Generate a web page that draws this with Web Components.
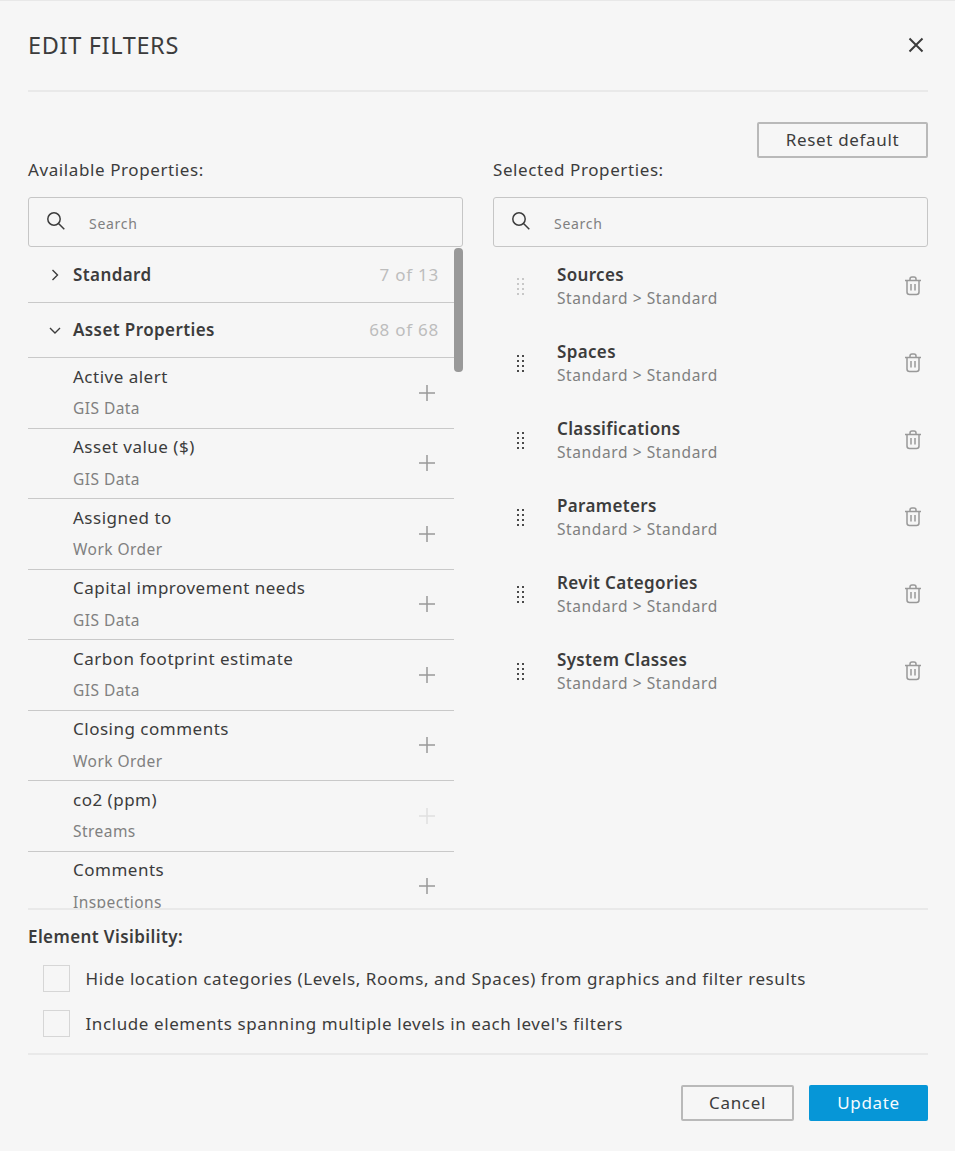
<!DOCTYPE html>
<html>
<head>
<meta charset="utf-8">
<title>Edit filters</title>
<style>
  html, body { margin: 0; height: 100%; background: #f6f6f6; }
  body { font-family: "Noto Sans", "Open Sans", sans-serif; color: #3c3c3c; overflow: hidden; }
</style>
</head>
<body>
<edit-filters>
  <span slot="title">EDIT FILTERS</span>

  <ui-button slot="reset" class="wide">Reset default</ui-button>

  <search-box slot="available-search"></search-box>
  <prop-group slot="available" count="7 of 13">Standard</prop-group>
  <prop-group slot="available" count="68 of 68" open>Asset Properties</prop-group>
  <prop-item slot="available" sub="GIS Data">Active alert</prop-item>
  <prop-item slot="available" sub="GIS Data">Asset value ($)</prop-item>
  <prop-item slot="available" sub="Work Order">Assigned to</prop-item>
  <prop-item slot="available" sub="GIS Data">Capital improvement needs</prop-item>
  <prop-item slot="available" sub="GIS Data">Carbon footprint estimate</prop-item>
  <prop-item slot="available" sub="Work Order">Closing comments</prop-item>
  <prop-item slot="available" sub="Streams" faded>co2 (ppm)</prop-item>
  <prop-item slot="available" sub="Inspections">Comments</prop-item>

  <search-box slot="selected-search"></search-box>
  <selected-item slot="selected" faded>Sources</selected-item>
  <selected-item slot="selected">Spaces</selected-item>
  <selected-item slot="selected">Classifications</selected-item>
  <selected-item slot="selected">Parameters</selected-item>
  <selected-item slot="selected">Revit Categories</selected-item>
  <selected-item slot="selected">System Classes</selected-item>

  <check-row slot="checks">Hide location categories (Levels, Rooms, and Spaces) from graphics and filter results</check-row>
  <check-row slot="checks">Include elements spanning multiple levels in each level's filters</check-row>

  <ui-button slot="actions" style="width:113px">Cancel</ui-button>
  <ui-button slot="actions" primary style="width:119px">Update</ui-button>
</edit-filters>

<script>
//Dialog
class EditFilters extends HTMLElement {
    connectedCallback() {
        const shadowRoot = this.attachShadow({ mode: 'open' });
        shadowRoot.innerHTML = `
            <style>
                :host {
                    display: flex;
                    flex-direction: column;
                    height: 1151px;
                    box-sizing: border-box;
                    padding: 0 27px 0 28px;
                    border-top: 1px solid #e8e8e8;
                    background: #f6f6f6;
                }
                header {
                    flex: none;
                    height: 91px;
                    box-sizing: border-box;
                    border-bottom: 2px solid #e9e9e9;
                    display: flex;
                    justify-content: space-between;
                    padding-top: 28px;
                }
                .title { font-size: 23.5px; line-height: 32px; letter-spacing: 0.66px; color: #3c3c3c; }
                .close { width: 16px; height: 16px; margin: 8px 4px 0 0; }
                .top { flex: none; display: flex; justify-content: flex-end; padding-top: 30px; height: 36px; }
                .cols {
                    flex: 1;
                    min-height: 0;
                    display: grid;
                    grid-template-columns: 435px 435px;
                    column-gap: 30px;
                }
                .col { display: flex; flex-direction: column; min-height: 0; }
                .col-label { flex: none; font-size: 17px; line-height: 24px; height: 39px; letter-spacing: 0.6px; }
                .scroll { flex: 1; min-height: 0; overflow: hidden; position: relative; padding-right: 9px; padding-top: 1px; }
                .thumb {
                    position: absolute; right: 0; top: 1px; width: 9px; height: 124px;
                    background: #999; border-radius: 4px;
                }
                .sel { flex: 1; }
                .visibility {
                    flex: none;
                    height: 147px;
                    box-sizing: border-box;
                    border-top: 2px solid #e9e9e9;
                    border-bottom: 2px solid #e9e9e9;
                    padding-top: 15px;
                }
                .visibility b { display: block; font-size: 17px; line-height: 24px; font-weight: 600; letter-spacing: 0.4px; }
                .checks { display: flex; flex-direction: column; gap: 18px; padding-left: 15px; margin-top: 16px; }
                footer { flex: none; display: flex; justify-content: flex-end; gap: 15px; padding-top: 30px; height: 96px; box-sizing: border-box; }
            </style>
            <header>
                <div class="title"><slot name="title"></slot></div>
                <svg class="close" viewBox="0 0 16 16" fill="none" stroke="#3c3c3c" stroke-width="2"><path d="M1.5 1.5l13 13M14.5 1.5l-13 13"/></svg>
            </header>
            <div class="top"><slot name="reset"></slot></div>
            <div class="cols">
                <section class="col">
                    <div class="col-label">Available Properties:</div>
                    <slot name="available-search"></slot>
                    <div class="scroll">
                        <slot name="available"></slot>
                        <div class="thumb"></div>
                    </div>
                </section>
                <section class="col">
                    <div class="col-label">Selected Properties:</div>
                    <slot name="selected-search"></slot>
                    <div class="sel"><slot name="selected"></slot></div>
                </section>
            </div>
            <div class="visibility">
                <b>Element Visibility:</b>
                <div class="checks"><slot name="checks"></slot></div>
            </div>
            <footer><slot name="actions"></slot></footer>
        `;
    }
}
customElements.define("edit-filters", EditFilters);

//Boton
class UiButton extends HTMLElement {
    connectedCallback() {
        const shadowRoot = this.attachShadow({ mode: 'open' });
        shadowRoot.innerHTML = `
            <style>
                :host {
                    display: inline-flex;
                    align-items: center;
                    justify-content: center;
                    box-sizing: border-box;
                    height: 36px;
                    padding-bottom: 2px;
                    border: 2px solid #b9b9b9;
                    border-radius: 2px;
                    font-size: 17px;
                    color: #3c3c3c;
                    letter-spacing: 0.66px;
                }
                :host(.wide) { width: 171px; }
                :host([primary]) { background: #0696d7; border-color: #0696d7; color: #f5fbfe; }
            </style>
            <slot></slot>
        `;
    }
}
customElements.define("ui-button", UiButton);

//Caja de busqueda
class SearchBox extends HTMLElement {
    connectedCallback() {
        const shadowRoot = this.attachShadow({ mode: 'open' });
        shadowRoot.innerHTML = `
            <style>
                :host {
                    display: flex;
                    flex: none;
                    align-items: center;
                    box-sizing: border-box;
                    height: 50px;
                    border: 1px solid #c6c6c6;
                    border-radius: 3px;
                    padding-left: 17px;
                }
                svg { width: 20px; height: 20px; flex: none; margin-top: -2px; }
                span { margin-left: 23px; font-size: 14px; color: #808080; padding-top: 2px; letter-spacing: 0.7px; }
            </style>
            <svg viewBox="0 0 20 20" fill="none" stroke="#3c3c3c" stroke-width="1.5"><circle cx="8" cy="8" r="6.2"/><path d="M12.5 12.5l5.8 5.8"/></svg>
            <span>Search</span>
        `;
    }
}
customElements.define("search-box", SearchBox);

//Grupo
class PropGroup extends HTMLElement {
    connectedCallback() {
        const shadowRoot = this.attachShadow({ mode: 'open' });
        const arrow = this.hasAttribute('open') ? 'M1 4l5 5 5-5' : 'M3.5 1l5 5-5 5';
        shadowRoot.innerHTML = `
            <style>
                :host {
                    display: flex;
                    align-items: center;
                    box-sizing: border-box;
                    height: 55px;
                    border-bottom: 1px solid #c9c9c9;
                    padding: 0 15px 1px 21px;
                }
                svg { width: 12px; height: 12px; flex: none; margin-right: 12px; }
                .name { flex: 1; font-size: 17px; font-weight: 600; color: #3c3c3c; letter-spacing: 0.4px; }
                .count { font-size: 17px; color: #bdbdbd; letter-spacing: 0.75px; }
            </style>
            <svg viewBox="0 0 12 12" fill="none" stroke="#3c3c3c" stroke-width="1.4"><path d="${arrow}"/></svg>
            <span class="name"><slot></slot></span>
            <span class="count">${this.getAttribute('count')}</span>
        `;
    }
}
customElements.define("prop-group", PropGroup);

//Propiedad disponible
class PropItem extends HTMLElement {
    connectedCallback() {
        const shadowRoot = this.attachShadow({ mode: 'open' });
        const stroke = this.hasAttribute('faded') ? '#e0e0e0' : '#999';
        shadowRoot.innerHTML = `
            <style>
                :host {
                    display: flex;
                    align-items: flex-start;
                    box-sizing: border-box;
                    height: 70.5px;
                    border-bottom: 1px solid #c9c9c9;
                    padding-left: 45px;
                }
                .text { flex: 1; }
                .name { font-size: 17px; line-height: 24px; padding-top: 6.75px; letter-spacing: 0.5px; color: #3c3c3c; }
                .sub { font-size: 15.5px; line-height: 22px; margin-top: 8.5px; color: #808080; letter-spacing: 0.45px; }
                svg { width: 16px; height: 16px; margin: 26.75px 19px 0 0; flex: none; }
            </style>
            <div class="text">
                <div class="name"><slot></slot></div>
                <div class="sub">${this.getAttribute('sub')}</div>
            </div>
            <svg viewBox="0 0 16 16" fill="none" stroke="${stroke}" stroke-width="1.5"><path d="M8 0v16M0 8h16"/></svg>
        `;
    }
}
customElements.define("prop-item", PropItem);

//Propiedad seleccionada
class SelectedItem extends HTMLElement {
    connectedCallback() {
        const shadowRoot = this.attachShadow({ mode: 'open' });
        const dots = this.hasAttribute('faded') ? '#c8c8c8' : '#4a4a4a';
        let grip = '';
        for (const y of [1, 6, 11, 16]) {
            for (const x of [1, 6]) {
                grip += `<rect x="${x - 1}" y="${y - 1}" width="2" height="2"/>`;
            }
        }
        shadowRoot.innerHTML = `
            <style>
                :host {
                    display: flex;
                    align-items: flex-start;
                    box-sizing: border-box;
                    height: 77px;
                    padding: 16px 6px 0 23.5px;
                }
                .grip { width: 7px; height: 17px; flex: none; margin: 15px 33.5px 0 0; }
                .text { flex: 1; }
                .name { font-size: 17px; line-height: 24px; font-weight: 600; color: #3c3c3c; letter-spacing: 0.35px; }
                .sub { font-size: 15.5px; line-height: 22px; color: #808080; letter-spacing: 0.6px; }
                .trash { width: 18px; height: 20px; flex: none; margin-top: 13px; }
            </style>
            <svg class="grip" viewBox="0 0 7 17" fill="${dots}">${grip}</svg>
            <div class="text">
                <div class="name"><slot></slot></div>
                <div class="sub">Standard &gt; Standard</div>
            </div>
            <svg class="trash" viewBox="0 0 18 20" fill="none" stroke="#999" stroke-width="1.5"><path d="M1 4.5h16M6 4.5V3a2 2 0 0 1 2-2h2a2 2 0 0 1 2 2v1.5M3 4.5V16a2.5 2.5 0 0 0 2.5 2.5h7A2.5 2.5 0 0 0 15 16V4.5M7 8v6.5M11 8v6.5"/></svg>
        `;
    }
}
customElements.define("selected-item", SelectedItem);

//Casilla
class CheckRow extends HTMLElement {
    connectedCallback() {
        const shadowRoot = this.attachShadow({ mode: 'open' });
        shadowRoot.innerHTML = `
            <style>
                :host { display: flex; align-items: center; height: 27px; font-size: 17px; letter-spacing: 0.59px; color: #3c3c3c; }
                i { display: block; width: 27px; height: 27px; box-sizing: border-box; border: 1px solid #d6d6d6; margin-right: 15.5px; flex: none; }
            </style>
            <i></i><span><slot></slot></span>
        `;
    }
}
customElements.define("check-row", CheckRow);
</script>
</body>
</html>
